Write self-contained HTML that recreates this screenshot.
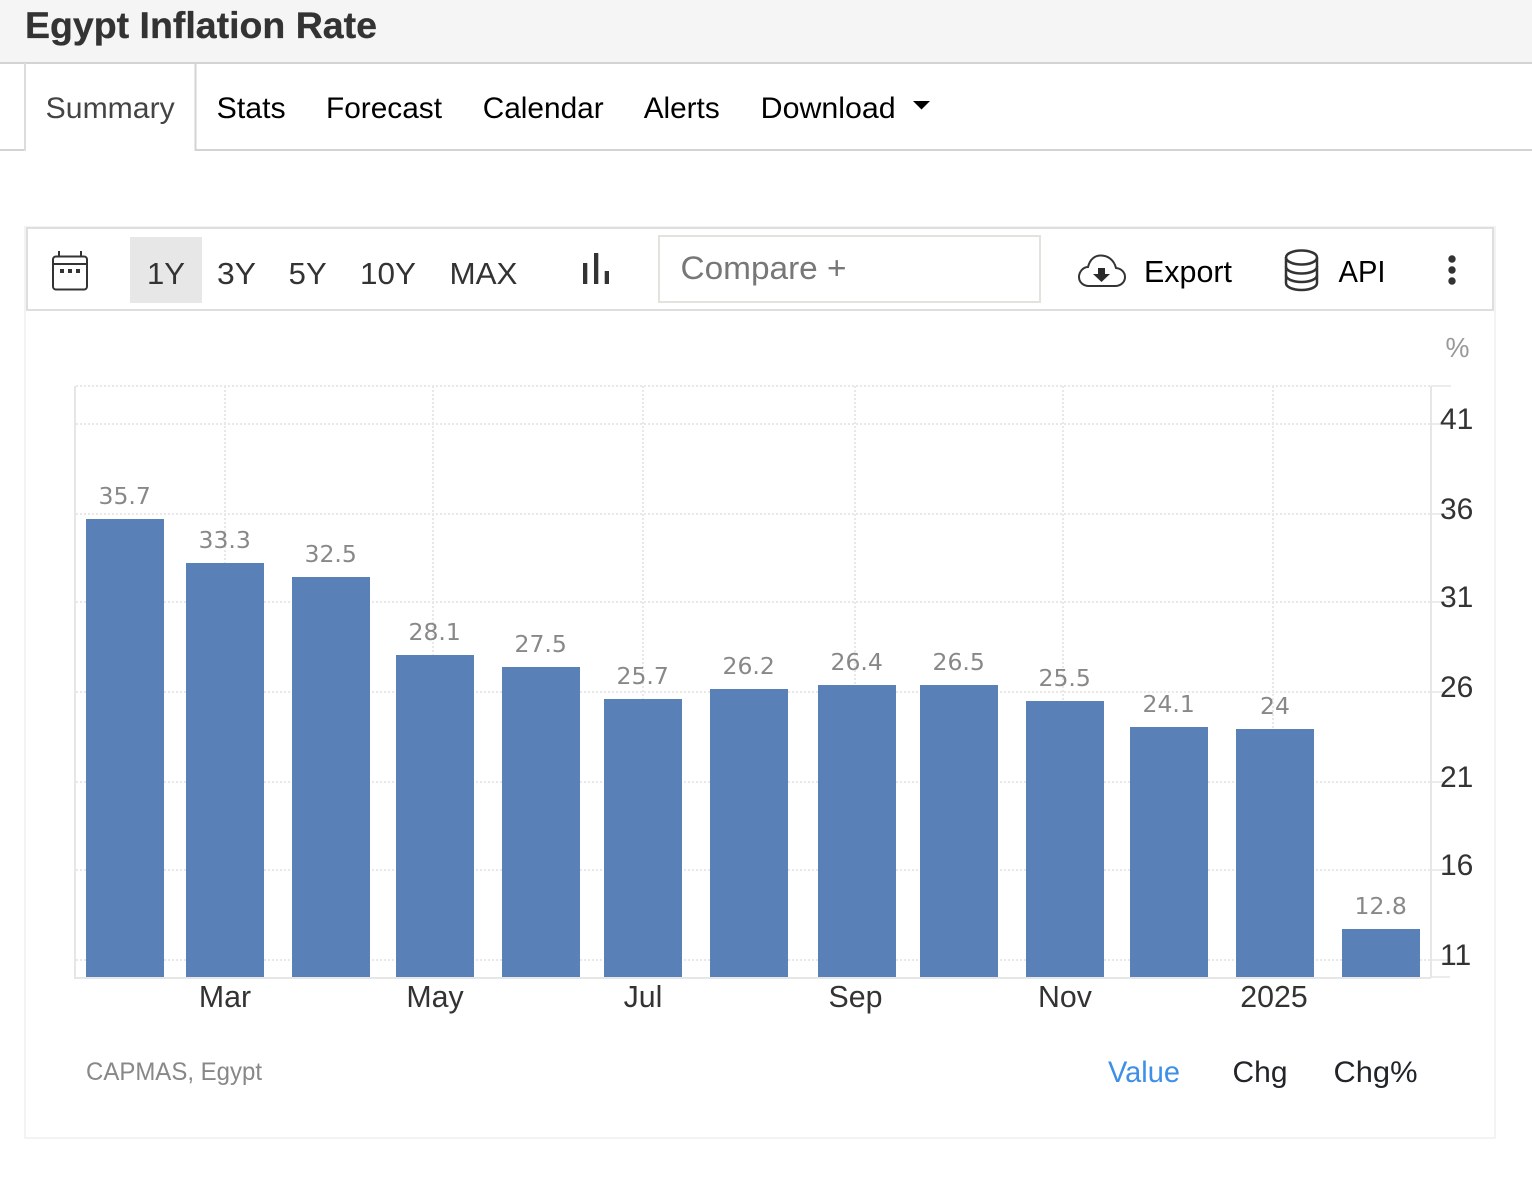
<!DOCTYPE html>
<html lang="en">
<head>
<meta charset="utf-8">
<title>Egypt Inflation Rate</title>
<style>
html,body{margin:0;padding:0;background:#fff;width:1532px;height:1178px;overflow:hidden}
svg{display:block}
text{font-family:"Liberation Sans",Arial,sans-serif}
.nav{font-size:30px;fill:#000}
.tb{font-size:31px;fill:#333}
.lab{font-family:"DejaVu Sans",sans-serif;font-size:23.500px;fill:#888;text-anchor:middle}
.y{font-size:30px;fill:#333}
.x{font-size:30.300px;fill:#333;text-anchor:middle}
.grid{stroke:#e8e8e8;stroke-width:2;stroke-dasharray:2 2;fill:none}
.ax{stroke:#e6e6e6;stroke-width:2;fill:none}
.bar{fill:#5a80b8}
</style>
</head>
<body>
<svg width="1532" height="1178" viewBox="0 0 1532 1178" xmlns="http://www.w3.org/2000/svg">
<!-- header -->
<rect x="0" y="0" width="1532" height="63" fill="#f5f5f5"/>
<rect x="0" y="62" width="1532" height="2" fill="#d3d3d3"/>
<text x="25" y="38" font-size="37" font-weight="700" fill="#333" stroke="#333" stroke-width="0.300" textLength="352" lengthAdjust="spacingAndGlyphs">Egypt Inflation Rate</text>

<!-- tabs -->
<rect x="0" y="149" width="25" height="2" fill="#d3d3d3"/>
<rect x="195" y="149" width="1337" height="2" fill="#d3d3d3"/>
<rect x="24" y="63" width="2" height="88" fill="#dcdcdc"/>
<rect x="194.500" y="63" width="2" height="88" fill="#d3d3d3"/>
<text class="nav" x="45.700" y="118" style="fill:#444" textLength="129" lengthAdjust="spacingAndGlyphs">Summary</text>
<text class="nav" x="216.700" y="118" textLength="69" lengthAdjust="spacingAndGlyphs">Stats</text>
<text class="nav" x="326" y="118" textLength="116" lengthAdjust="spacingAndGlyphs">Forecast</text>
<text class="nav" x="482.700" y="118" textLength="121" lengthAdjust="spacingAndGlyphs">Calendar</text>
<text class="nav" x="643.700" y="118" textLength="76" lengthAdjust="spacingAndGlyphs">Alerts</text>
<text class="nav" x="760.700" y="118" textLength="135" lengthAdjust="spacingAndGlyphs">Download</text>
<path d="M913 101h17l-8.500 8.500z" fill="#000"/>

<!-- chart frame -->
<rect x="25" y="227" width="1470" height="911" fill="#fff" stroke="#f3f3f3" stroke-width="2"/>
<rect x="27" y="228" width="1466" height="82" fill="#fff" stroke="#dedede" stroke-width="2"/>

<!-- calendar icon -->
<g fill="none" stroke="#333" stroke-width="2">
<rect x="53" y="256.500" width="34" height="33" rx="3"/>
<path d="M53 264h34M59 251v5.500M81 251v5.500"/>
</g>
<path d="M60 269h4v4h-4zM68 269h4v4h-4zM76 269h4v4h-4z" fill="#333"/>

<!-- range buttons -->
<rect x="130" y="237" width="72" height="66" fill="#e7e7e7"/>
<text class="tb" x="147" y="284" textLength="38" lengthAdjust="spacingAndGlyphs">1Y</text>
<text class="tb" x="217" y="284" textLength="39" lengthAdjust="spacingAndGlyphs">3Y</text>
<text class="tb" x="288.700" y="284" textLength="38" lengthAdjust="spacingAndGlyphs">5Y</text>
<text class="tb" x="360" y="284" textLength="56" lengthAdjust="spacingAndGlyphs">10Y</text>
<text class="tb" x="449.500" y="284" textLength="68" lengthAdjust="spacingAndGlyphs">MAX</text>

<!-- bar chart icon -->
<path d="M583 263h4.300v21h-4.300zM594 253h4.300v31h-4.300zM604.700 271h4.300v13h-4.300z" fill="#333"/>

<!-- compare -->
<rect x="659" y="236" width="381" height="66" fill="#fff" stroke="#e3e3dd" stroke-width="2"/>
<text x="680.500" y="279" font-size="32" fill="#777" textLength="166" lengthAdjust="spacingAndGlyphs">Compare +</text>

<!-- export icon -->
<path d="M1089 286H1115C1121 286 1125 282 1125 277C1125 272 1121 268.500 1116 268C1114 260 1108 255.500 1101 255.500C1095 255.500 1090 259 1088 267C1083 267 1079 272 1079 277C1079 282 1083 286 1089 286Z" fill="none" stroke="#333" stroke-width="2"/>
<path d="M1098 268h7v6h5l-8.500 8-8.500-8h5z" fill="#2a2a2a"/>
<text x="1144" y="282" font-size="31" fill="#000" textLength="88" lengthAdjust="spacingAndGlyphs">Export</text>

<!-- database icon -->
<g fill="none" stroke="#333" stroke-width="2.500">
<ellipse cx="1301.500" cy="257.500" rx="15.500" ry="7"/>
<path d="M1286 257.500v25.500c0 4.200 7 7 15.500 7s15.500-2.800 15.500-7v-25.500"/>
<path d="M1286 266.500c0 4.200 7 7 15.500 7s15.500-2.800 15.500-7"/>
<path d="M1286 275c0 4.200 7 7 15.500 7s15.500-2.800 15.500-7"/>
</g>
<text x="1338.500" y="282" font-size="31" fill="#000" textLength="47" lengthAdjust="spacingAndGlyphs">API</text>

<!-- kebab -->
<circle cx="1452" cy="259" r="3.700" fill="#333"/>
<circle cx="1452" cy="270" r="3.700" fill="#333"/>
<circle cx="1452" cy="281" r="3.700" fill="#333"/>

<text x="1445.500" y="357" font-size="28" fill="#999" textLength="24" lengthAdjust="spacingAndGlyphs">%</text>

<!-- grid -->
<path class="grid" d="M76 386H1431M76 424H1431M76 514H1431M76 602H1431M76 692H1431M76 782H1431M76 870H1431M76 960H1431"/>
<path class="grid" d="M225 386V977M433 386V977M643 386V977M855 386V977M1063 386V977M1273 386V977"/>

<!-- bars -->
<rect class="bar" x="86" y="519" width="78" height="458"/>
<rect class="bar" x="186" y="563" width="78" height="414"/>
<rect class="bar" x="292" y="577" width="78" height="400"/>
<rect class="bar" x="396" y="655" width="78" height="322"/>
<rect class="bar" x="502" y="667" width="78" height="310"/>
<rect class="bar" x="604" y="699" width="78" height="278"/>
<rect class="bar" x="710" y="689" width="78" height="288"/>
<rect class="bar" x="818" y="685" width="78" height="292"/>
<rect class="bar" x="920" y="685" width="78" height="292"/>
<rect class="bar" x="1026" y="701" width="78" height="276"/>
<rect class="bar" x="1130" y="727" width="78" height="250"/>
<rect class="bar" x="1236" y="729" width="78" height="248"/>
<rect class="bar" x="1342" y="929" width="78" height="48"/>

<!-- axes -->
<path class="ax" d="M75 386V978H1431M1431 386V978"/>
<path d="M1431 386h20M1431 424h20M1431 514h20M1431 602h20M1431 692h20M1431 782h20M1431 870h20M1431 960h20M1431 977h19" stroke="#e6e6e6" stroke-width="1.500" fill="none"/>

<!-- value labels -->
<text class="lab" x="124.700" y="504">35.7</text>
<text class="lab" x="224.700" y="548">33.3</text>
<text class="lab" x="330.700" y="562">32.5</text>
<text class="lab" x="434.700" y="640">28.1</text>
<text class="lab" x="540.700" y="652">27.5</text>
<text class="lab" x="642.700" y="684">25.7</text>
<text class="lab" x="748.700" y="674">26.2</text>
<text class="lab" x="856.700" y="670">26.4</text>
<text class="lab" x="958.700" y="670">26.5</text>
<text class="lab" x="1064.700" y="686">25.5</text>
<text class="lab" x="1168.700" y="712">24.1</text>
<text class="lab" x="1275" y="714">24</text>
<text class="lab" x="1380.700" y="914">12.8</text>

<!-- y labels -->
<text class="y" x="1440" y="429">41</text>
<text class="y" x="1440" y="519">36</text>
<text class="y" x="1440" y="607">31</text>
<text class="y" x="1440" y="697">26</text>
<text class="y" x="1440" y="787">21</text>
<text class="y" x="1440" y="875">16</text>
<text class="y" x="1440" y="965">11</text>

<!-- x labels -->
<text class="x" x="225" y="1007">Mar</text>
<text class="x" x="435" y="1007">May</text>
<text class="x" x="643" y="1007">Jul</text>
<text class="x" x="855.500" y="1007">Sep</text>
<text class="x" x="1065" y="1007">Nov</text>
<text class="x" x="1274" y="1007">2025</text>

<!-- footer -->
<text x="86" y="1080" font-size="25" fill="#888" textLength="176" lengthAdjust="spacingAndGlyphs">CAPMAS, Egypt</text>
<text x="1108" y="1082" font-size="30" fill="#3d8fe8" textLength="72" lengthAdjust="spacingAndGlyphs">Value</text>
<text x="1232.500" y="1082" font-size="30" fill="#212529" textLength="55" lengthAdjust="spacingAndGlyphs">Chg</text>
<text x="1333.500" y="1082" font-size="30" fill="#212529" textLength="84" lengthAdjust="spacingAndGlyphs">Chg%</text>
</svg>
</body>
</html>
